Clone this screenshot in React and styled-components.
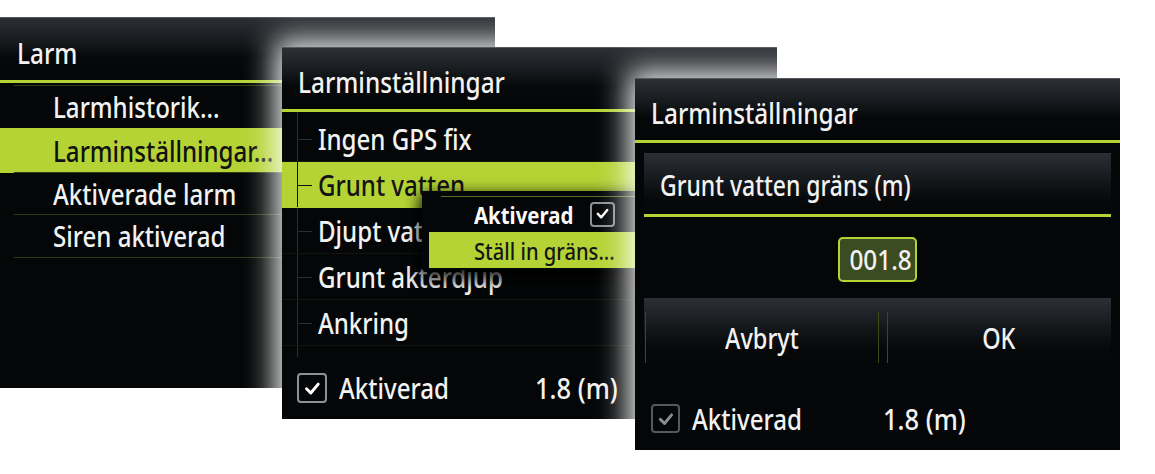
import React from "react";
import styled, { createGlobalStyle, css } from "styled-components";

const LIME = "#b5d334";
const INK = "#040607";

const GlobalStyle = createGlobalStyle`
  html, body {
    margin: 0;
    padding: 0;
    background: #ffffff;
  }
  body {
    font-family: "Noto Sans", "Open Sans", sans-serif;
    -webkit-font-smoothing: antialiased;
  }
`;

const Stage = styled.div`
  position: relative;
  width: 1155px;
  height: 474px;
  overflow: hidden;
  background: #fff;
`;

// the device font is a condensed one, so squeeze the text a bit
const Txt = styled.span`
  display: inline-block;
  white-space: nowrap;
  transform: scaleX(${(p) => p.$k || 0.86});
  transform-origin: ${(p) => p.$o || "left"} center;
`;

// each dialog is a window on the desktop, placed where it sits in the shot
const Window = styled.section`
  position: absolute;
  left: ${(p) => p.$x}px;
  top: ${(p) => p.$y}px;
  width: ${(p) => p.$w}px;
  height: ${(p) => p.$h}px;
  display: flex;
  flex-direction: column;
  background: ${INK};
  border-top: 1px solid #55595e;
  box-sizing: border-box;
  color: #f2f2f2;
  ${(p) =>
    p.$glow &&
    css`
      box-shadow: 0 0 28px 7px rgba(255, 255, 255, 0.95);
    `}
`;

const TitleBar = styled.header`
  flex: 0 0 auto;
  height: ${(p) => p.$h || 64}px;
  display: flex;
  align-items: center;
  padding: 6px 0 0 ${(p) => p.$pad || 16}px;
  box-sizing: border-box;
  border-bottom: 3px solid ${LIME};
  background: linear-gradient(#2c3035 0%, #16191c 40%, #06080a 62%, ${INK} 100%);
  font-size: 29px;
  font-weight: 500;
`;

const Menu = styled.ul`
  list-style: none;
  margin: 0;
  padding: 3px 0 0;
`;

const MenuRow = styled.li`
  position: relative;
  height: ${(p) => (p.$active ? 45 : 42)}px;
  display: flex;
  align-items: center;
  padding-left: 53px;
  font-size: 28px;
  font-weight: 500;
  color: ${(p) => (p.$active ? "#111" : "#f2f2f2")};
  background: ${(p) => (p.$active ? LIME : "transparent")};

  &::before {
    content: "";
    position: absolute;
    left: 14px;
    right: 0;
    top: -1px;
    height: 1px;
    background: ${(p) => (p.$active ? "transparent" : "#2f3b14")};
  }
`;

const MenuEnd = styled.li`
  height: 1px;
  margin-left: 14px;
  background: #2f3b14;
`;

const Tree = styled.ul`
  position: relative;
  list-style: none;
  margin: 0;
  padding: 4px 0 11px;

  &::before {
    content: "";
    position: absolute;
    left: 15px;
    top: 0;
    bottom: 0;
    width: 1px;
    background: #2a2e32;
  }
`;

const TreeRow = styled.li`
  position: relative;
  height: 46px;
  display: flex;
  align-items: center;
  padding-left: 36px;
  font-size: 28px;
  font-weight: 500;
  color: ${(p) => (p.$active ? "#141414" : "#f2f2f2")};
  background: ${(p) => (p.$active ? LIME : "transparent")};
  border-bottom: 1px solid ${(p) => (p.$active ? LIME : "#12160c")};
  box-sizing: border-box;

  &::before {
    content: "";
    position: absolute;
    left: 15px;
    top: 0;
    bottom: 0;
    width: 1px;
    background: ${(p) => (p.$active ? "#101010" : "#2a2e32")};
  }
  &::after {
    content: "";
    position: absolute;
    left: 15px;
    width: 15px;
    top: 50%;
    height: 1px;
    background: ${(p) => (p.$active ? "#101010" : "#2a2e32")};
  }
`;

const Footer = styled.div`
  flex: 1;
  display: flex;
  align-items: center;
  gap: 12px;
  padding: ${(p) => p.$top || 0}px 0 0 ${(p) => p.$pad}px;
  font-size: 28px;
  font-weight: 500;
`;

const Label = styled.span`
  width: ${(p) => p.$w}px;
`;

const Box = styled.span`
  display: inline-flex;
  align-items: center;
  justify-content: center;
  flex: 0 0 auto;
  width: ${(p) => p.$size}px;
  height: ${(p) => p.$size}px;
  box-sizing: border-box;
  border: 2px solid ${(p) => (p.$muted ? "#55585c" : "#8d9095")};
  border-radius: 4px;
  background: #050607;

  svg {
    width: 72%;
    height: 72%;
  }
`;

const Check = ({ size, muted }) => (
  <Box $size={size} $muted={muted}>
    <svg viewBox="0 0 24 24" fill="none">
      <polyline
        points="4.5,12.5 10,18 19.5,6.5"
        stroke={muted ? "#8a8c8f" : "#ffffff"}
        strokeWidth="3.8"
        strokeLinecap="round"
        strokeLinejoin="round"
      />
    </svg>
  </Box>
);

// context menu popping out of the "Grunt vatten" row
const Popup = styled.div`
  position: absolute;
  left: 140px;
  top: 79px;
  width: 240px;
  height: 79px;
  box-sizing: border-box;
  padding: 5px 0 0 7px;
  background: ${INK};
  box-shadow: 0 6px 14px 3px rgba(0, 0, 0, 0.9);
`;

const PopRow = styled.div`
  height: 36px;
  display: flex;
  align-items: center;
  padding-left: 45px;
  font-size: 24px;
  font-weight: ${(p) => (p.$bold ? 700 : 500)};
  color: ${(p) => (p.$active ? "#151515" : "#fafafa")};
  background: ${(p) => (p.$active ? LIME : "transparent")};
  ${(p) =>
    p.$rule &&
    css`
      background-image: linear-gradient(#56702a, #56702a);
      background-size: calc(100% - 12px) 1px;
      background-position: 12px 0;
      background-repeat: no-repeat;
    `}
`;

const PopLabel = styled.span`
  width: 116px;
`;

const Body = styled.div`
  position: relative;
  flex: 1;
  display: flex;
  flex-direction: column;
`;

const Panel = styled.div`
  margin: ${(p) => p.$m};
  height: ${(p) => p.$h}px;
  box-sizing: border-box;
  background: linear-gradient(#2c3036 0%, #15181b 45%, #07090b 75%, ${INK} 100%);
`;

const FieldHead = styled(Panel)`
  display: flex;
  align-items: center;
  padding: 2px 0 0 16px;
  border-bottom: 3px solid ${LIME};
  font-size: 28px;
  font-weight: 500;
`;

const NumberBox = styled.div`
  align-self: center;
  margin-top: 20px;
  width: 79px;
  height: 45px;
  box-sizing: border-box;
  display: flex;
  align-items: center;
  justify-content: center;
  padding-left: 6px;
  border: 2px solid ${LIME};
  border-radius: 5px;
  background: #3b4c22;
  font-size: 27px;
  font-weight: 500;
`;

const ButtonBar = styled(Panel)`
  display: grid;
  grid-template-columns: 235px 1fr;
  column-gap: 7px;
`;

const Btn = styled.div`
  position: relative;
  display: flex;
  align-items: center;
  justify-content: center;
  padding-top: 14px;
  font-size: 28px;
  font-weight: 500;

  &::before,
  &::after {
    content: "";
    position: absolute;
    top: 14px;
    bottom: 0;
    width: 1px;
    background: #3c4a18;
  }
  &::before {
    left: 1px;
    display: ${(p) => (p.$left ? "block" : "none")};
  }
  &::after {
    right: 0;
    display: ${(p) => (p.$right ? "block" : "none")};
  }
`;

const alarmMenu = ["Larmhistorik...", "Larminställningar...", "Aktiverade larm", "Siren aktiverad"];
const alarmList = ["Ingen GPS fix", "Grunt vatten", "Djupt vatten", "Grunt akterdjup", "Ankring"];

export default function App() {
  return (
    <>
      <GlobalStyle />
      <Stage>
        <Window $x={0} $y={17} $w={495} $h={371}>
          <TitleBar $pad={17} $h={65}>
            <Txt $k={0.84}>Larm</Txt>
          </TitleBar>
          <Menu>
            {alarmMenu.map((item, i) => (
              <MenuRow key={item} $active={i === 1}>
                <Txt>{item}</Txt>
              </MenuRow>
            ))}
            <MenuEnd />
          </Menu>
        </Window>

        <Window $x={282} $y={47} $w={495} $h={372} $glow>
          <TitleBar>
            <Txt $k={0.84}>Larminställningar</Txt>
          </TitleBar>
          <Body>
            <Tree>
              {alarmList.map((item, i) => (
                <TreeRow key={item} $active={i === 1}>
                  <Txt>{item}</Txt>
                </TreeRow>
              ))}
            </Tree>
            <Popup>
              <PopRow $bold $rule>
                <PopLabel>
                  <Txt $k={0.85}>Aktiverad</Txt>
                </PopLabel>
                <Check size={25} />
              </PopRow>
              <PopRow $active>
                <Txt $k={0.84}>Ställ in gräns...</Txt>
              </PopRow>
            </Popup>
            <Footer $pad={15}>
              <Check size={30} />
              <Label $w={184}>
                <Txt>Aktiverad</Txt>
              </Label>
              <Txt $k={0.91}>1.8 (m)</Txt>
            </Footer>
          </Body>
        </Window>

        <Window $x={635} $y={78} $w={485} $h={372} $glow>
          <TitleBar>
            <Txt $k={0.84}>Larminställningar</Txt>
          </TitleBar>
          <Body>
            <FieldHead $m="10px 9px 0" $h={64}>
              <Txt $k={0.82}>Grunt vatten gräns (m)</Txt>
            </FieldHead>
            <NumberBox>
              <Txt $k={0.9} $o="center">
                001.8
              </Txt>
            </NumberBox>
            <ButtonBar $m="16px 9px 0" $h={65}>
              <Btn $left $right>
                <Txt $k={0.84} $o="center">
                  Avbryt
                </Txt>
              </Btn>
              <Btn $left>
                <Txt $k={0.84} $o="center">
                  OK
                </Txt>
              </Btn>
            </ButtonBar>
            <Footer $pad={16} $top={24}>
              <Check size={29} muted />
              <Label $w={179}>
                <Txt>Aktiverad</Txt>
              </Label>
              <Txt $k={0.91}>1.8 (m)</Txt>
            </Footer>
          </Body>
        </Window>
      </Stage>
    </>
  );
}
